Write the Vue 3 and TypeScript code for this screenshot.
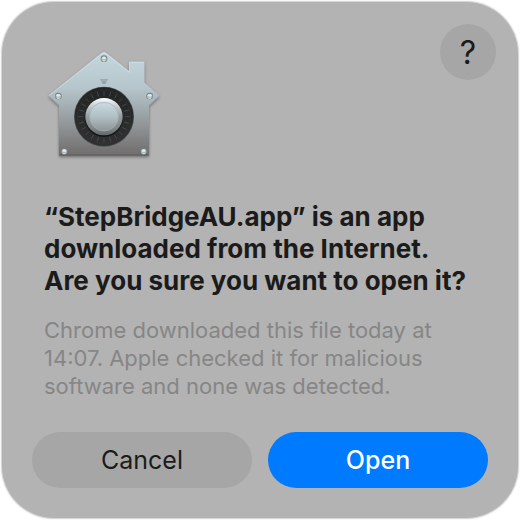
<script setup lang="ts">
import { ref } from 'vue'

type Choice = 'cancel' | 'open' | 'help'

const choice = ref<Choice | null>(null)

const rivets = [
  { x: 192, y: 56 },
  { x: 55, y: 168 },
  { x: 329, y: 168 },
  { x: 73, y: 334 },
  { x: 311, y: 334 },
]

const ticks = Array.from({ length: 24 }, (_, i) => i * 15)
</script>

<template>
  <main class="dialog" role="alertdialog" aria-labelledby="title" aria-describedby="detail">
    <header class="top">
      <svg class="app-icon" viewBox="0 0 384 384" aria-hidden="true">
        <defs>
          <linearGradient id="plate" x1="0" y1="0" x2="0" y2="1">
            <stop offset="0" stop-color="#c5d8df" />
            <stop offset="0.35" stop-color="#b5c5cb" />
            <stop offset="0.55" stop-color="#a1abae" />
            <stop offset="0.8" stop-color="#868889" />
            <stop offset="1" stop-color="#6f6c6c" />
          </linearGradient>
          <linearGradient id="rim" x1="0" y1="0" x2="0" y2="1">
            <stop offset="0" stop-color="#ffffff" />
            <stop offset="0.2" stop-color="#c8d0d3" />
            <stop offset="0.5" stop-color="#969da0" />
            <stop offset="0.8" stop-color="#818789" />
            <stop offset="1" stop-color="#63686a" />
          </linearGradient>
          <linearGradient id="knob" x1="0" y1="0" x2="0" y2="1">
            <stop offset="0" stop-color="#c9dbe2" />
            <stop offset="0.5" stop-color="#b1bfc4" />
            <stop offset="1" stop-color="#8e9496" />
          </linearGradient>
          <linearGradient id="dial" x1="0" y1="0" x2="0" y2="1">
            <stop offset="0" stop-color="#222424" />
            <stop offset="1" stop-color="#303030" />
          </linearGradient>
          <filter id="shadow" x="-10%" y="-10%" width="120%" height="120%">
            <feDropShadow dx="0" dy="4" stdDeviation="5" flood-color="#000000" flood-opacity="0.4" />
          </filter>
        </defs>

        <path
          d="M185 39 Q192 33 199 39 L267 93 V68 Q267 65 270 65 H310 Q313 65 313 68 V128 L356 164 Q359 167 356 170 L327 197 V344 Q327 347 324 347 H60 Q57 347 57 344 V197 L28 170 Q25 167 28 164 Z"
          fill="url(#plate)"
          filter="url(#shadow)"
        />
        <path d="M58 345 H326" stroke="#5d5a5a" stroke-width="3" />
        <path d="M28 166 L186 41 Q192 36 198 41 L268 97 V67 H312" fill="none" stroke="#dbe9ee" stroke-width="2" opacity="0.75" />
        <path d="M29 171 L58 197 M326 197 L355 171" stroke="#747f83" stroke-width="2" opacity="0.6" />

        <path d="M182 119 H202 L197 132 H187 Z" fill="#aab6ba" />
        <path d="M180 119 H204 M184 121 L190 132 L192 122 L194 132 L200 121" fill="none" stroke="#8b979b" stroke-width="2" />

        <circle cx="192" cy="230" r="90" fill="#4d5354" />
        <circle cx="192" cy="230" r="88" fill="url(#dial)" />
        <circle cx="192" cy="230" r="80" fill="none" stroke="#3b3e3e" stroke-width="2" opacity="0.5" />
        <g stroke="#525757" stroke-width="2">
          <path v-for="a in ticks" :key="a" d="M192 153 V167" :transform="`rotate(${a} 192 230)`" />
        </g>
        <circle cx="192" cy="234" r="57" fill="#171818" />
        <circle cx="192" cy="230" r="56" fill="url(#rim)" />
        <circle cx="192" cy="230" r="43" fill="url(#knob)" stroke="#a6b1b5" stroke-width="2" />

        <g v-for="r in rivets" :key="`${r.x}-${r.y}`">
          <circle :cx="r.x" :cy="r.y" r="10" fill="#747c7f" />
          <circle :cx="r.x" :cy="r.y + 1" r="8" fill="#aeb7ba" />
          <ellipse :cx="r.x" :cy="r.y - 2" rx="6" ry="4" fill="#e1e8ea" />
          <ellipse :cx="r.x" :cy="r.y + 6" rx="4" ry="2" fill="#d2d8da" />
        </g>
      </svg>
      <button class="help" type="button" aria-label="Help" @click="choice = 'help'">?</button>
    </header>

    <div class="copy">
      <h1 id="title">“StepBridgeAU.app” is an app downloaded from the Internet. Are you sure you want to open it?</h1>
      <p id="detail">Chrome downloaded this file today at 14:07. Apple checked it for malicious software and none was detected.</p>
    </div>

    <footer class="actions">
      <button class="action" type="button" @click="choice = 'cancel'">Cancel</button>
      <button class="action primary" type="button" @click="choice = 'open'">Open</button>
    </footer>
  </main>
</template>

<style>
body {
  background: #ffffff;
}
</style>

<style scoped>
.dialog {
  box-sizing: border-box;
  margin: 2px;
  padding: 22px 30px 30px;
  border-radius: 52px;
  background: #b3b3b3;
  box-shadow: 0 0 0 1px #d6d6d6, 0 0 2px 1px #e4e4e4;
  color: #1b1b1b;
  font-family: Inter, "Liberation Sans", sans-serif;
}

.top {
  display: flex;
  justify-content: space-between;
  align-items: flex-start;
}

.app-icon {
  width: 128px;
  height: 128px;
  margin: 16px 0 0 8px;
}

button {
  padding: 0;
  border: 0;
  background: #a6a6a6;
  color: #1b1b1b;
  font-family: inherit;
  font-size: 25px;
  cursor: pointer;
}

.help {
  width: 56px;
  height: 56px;
  margin-right: -8px;
  border-radius: 50%;
  font-size: 32px;
  font-weight: 400;
}

.copy {
  padding: 33px 12px 32px;
}

h1 {
  margin: 0 0 19px;
  font-size: 26px;
  font-weight: 750;
  line-height: 32px;
}

p {
  margin: 0;
  color: #868686;
  font-size: 22px;
  line-height: 28px;
}

.actions {
  display: grid;
  grid-template-columns: 1fr 1fr;
  gap: 16px;
}

.action {
  height: 56px;
  border-radius: 28px;
}

.primary {
  background: #007aff;
  color: #ffffff;
  font-weight: 500;
}
</style>
